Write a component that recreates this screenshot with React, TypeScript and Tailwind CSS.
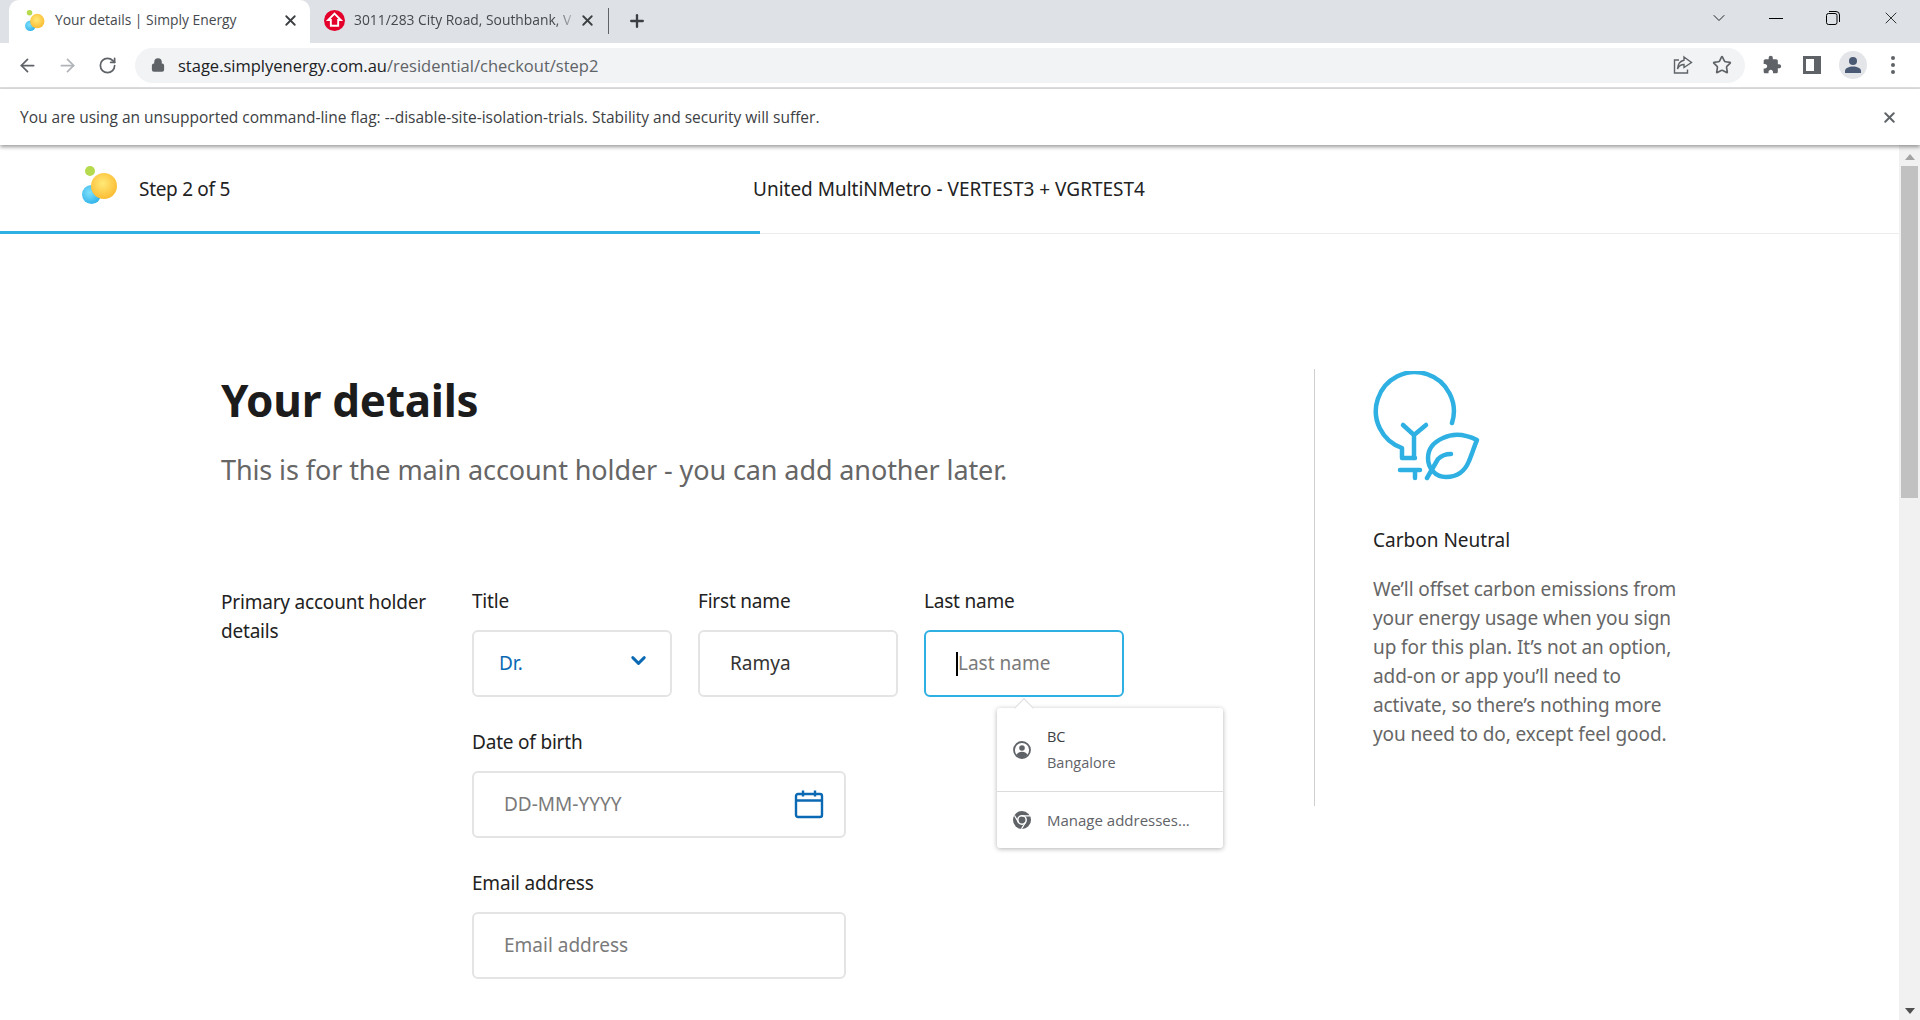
import { ArrowLeft, ArrowRight, ChevronDown, Lock, Plus, RotateCw, Star, X } from "lucide-react";

const Logo = ({ size }: { size: number }) => (
  <svg width={size} height={size} viewBox="0 0 38 38" className="shrink-0">
    <defs>
      <radialGradient id="sun" cx="45%" cy="40%" r="65%">
        <stop offset="0%" stopColor="#ffe977" />
        <stop offset="100%" stopColor="#fbb92e" />
      </radialGradient>
      <radialGradient id="sky" cx="40%" cy="40%" r="70%">
        <stop offset="0%" stopColor="#7fe0fb" />
        <stop offset="100%" stopColor="#29aee8" />
      </radialGradient>
    </defs>
    <circle cx="10" cy="5" r="5" fill="#b6da4e" />
    <circle cx="11.500" cy="28.500" r="9.500" fill="url(#sky)" />
    <circle cx="24" cy="20" r="13" fill="url(#sun)" />
  </svg>
);

const Field = ({ label, width, children }: { label: string; width: string; children: React.ReactNode }) => (
  <div className={width}>
    <div className="h-[41px] text-[19px] leading-[24px] tracking-[-0.2px] text-[#222]">{label}</div>
    {children}
  </div>
);

const boxClass = "flex h-[67px] items-center rounded-[6px] border-2 bg-white text-[19px]";

function TabStrip() {
  return (
    <div className="flex h-[43px] bg-[#dee1e6] pl-[9px] text-[13.85px] text-[#45494d]">
      <div className="flex w-[301px] items-center rounded-t-[10px] bg-white pb-[2px] pl-[15px] pr-[11px]">
        <Logo size={21} />
        <span className="ml-[10px] flex-1">Your details | Simply Energy</span>
        <X size={17} strokeWidth={2.6} className="text-[#3c4043]" />
      </div>
      <div className="flex w-[298px] items-center pb-[2px] pl-[14px] pr-[12px]">
        <svg width="21" height="21" viewBox="0 0 20 20" className="shrink-0">
          <circle cx="10" cy="10" r="10" fill="#e4002b" />
          <path d="M10 3.500 16 9.500h-2.500V15h-7V9.500H4Z" fill="none" stroke="#fff" strokeWidth="1.800" />
        </svg>
        <span className="ml-[9px] w-[224px] overflow-hidden whitespace-nowrap [mask-image:linear-gradient(to_right,black_90%,transparent)]">
          3011/283 City Road, Southbank, V
        </span>
        <X size={17} strokeWidth={2.6} className="ml-auto text-[#3c4043]" />
      </div>
      <div className="mt-[8px] h-[26px] w-px bg-[#5f6368]" />
      <Plus size={20} strokeWidth={2.8} className="ml-[18px] mt-[11px] text-[#3c4043]" />
      <div className="mb-[7px] ml-auto flex items-center pr-[19px] text-[#222]">
        <ChevronDown size={20} strokeWidth={1.2} />
        <div className="ml-[40px] h-px w-[14px] bg-black" />
        <svg width="14" height="14" viewBox="0 0 14 14" className="ml-[43px]" fill="none" stroke="#000" strokeWidth="1">
          <rect x="0.500" y="2.500" width="10.500" height="11" rx="2" />
          <path d="M3 .5h7a3.500 3.500 0 0 1 3.500 3.500v7" />
        </svg>
        <X size={20} strokeWidth={1.1} className="ml-[41px]" />
      </div>
    </div>
  );
}

function Toolbar() {
  return (
    <div className="flex h-[46px] items-center border-b-2 border-[#dedfe1] bg-white text-[#5f6368]">
      <ArrowLeft size={21} strokeWidth={2} className="ml-[17px]" />
      <ArrowRight size={21} strokeWidth={2} className="ml-[19px] text-[#b0b3b7]" />
      <RotateCw size={19} strokeWidth={2.2} className="ml-[20px]" />
      <div className="ml-[18px] flex h-[35px] w-[1610px] items-center rounded-full bg-[#f1f3f4] pl-[16px] pr-[13px]">
        <Lock size={14} strokeWidth={3} fill="#5f6368" />
        <div className="ml-[13px] flex-1 pt-[2px] text-[16.5px]">
          <span className="text-[#202124]">stage.simplyenergy.com.au</span>
          <span>/residential/checkout/step2</span>
        </div>
        <svg width="20" height="20" viewBox="0 0 20 20" fill="none" stroke="#5f6368" strokeWidth="1.400">
          <path d="M6 5H1.500v13h13v-3.500" />
          <path d="M11 2l7.500 5.500L11 12.500V9.500C8 9.500 5.800 11 4.500 14 4.800 9.500 7 6 11 5.200Z" />
        </svg>
        <Star size={20} strokeWidth={2} className="ml-[19px]" />
      </div>
      <svg width="20" height="20" viewBox="0 0 24 24" className="ml-[17px]" fill="#5f6368">
        <path d="M20.500 11H19V7c0-1.100-.9-2-2-2h-4V3.500C13 2.120 11.880 1 10.500 1S8 2.120 8 3.500V5H4c-1.100 0-1.990.9-1.990 2v3.800H3.500c1.490 0 2.700 1.210 2.700 2.700s-1.210 2.700-2.700 2.700H2V20c0 1.100.9 2 2 2h3.800v-1.500c0-1.490 1.210-2.700 2.700-2.700 1.490 0 2.700 1.210 2.700 2.700V22H17c1.100 0 2-.9 2-2v-4h1.500c1.380 0 2.500-1.120 2.500-2.500S21.880 11 20.500 11z" />
      </svg>
      <div className="ml-[21px] h-[18px] w-[18px] border-[3px] border-[#5f6368] bg-white pl-[8px]">
        <div className="h-full w-full bg-[#5f6368]" />
      </div>
      <div className="ml-[18px] flex h-[28px] w-[28px] items-center justify-center rounded-full bg-[#e3e5e9]">
        <svg width="18" height="18" viewBox="0 0 18 18" fill="#4a5a75">
          <circle cx="9" cy="5" r="4" />
          <path d="M1 17v-2c0-3 4-4.500 8-4.500s8 1.500 8 4.500v2Z" />
        </svg>
      </div>
      <div className="ml-[24px] flex flex-col gap-[3px]">
        <div className="h-[4px] w-[4px] rounded-full bg-[#5f6368]" />
        <div className="h-[4px] w-[4px] rounded-full bg-[#5f6368]" />
        <div className="h-[4px] w-[4px] rounded-full bg-[#5f6368]" />
      </div>
    </div>
  );
}

function InfoBar() {
  return (
    <div className="z-10 flex h-[56px] items-center justify-between bg-white pl-[20px] pr-[22px] pt-px text-[15.5px] text-[#3c4043] shadow-[0_2px_4px_rgba(0,0,0,0.4)]">
      <span>You are using an unsupported command-line flag: --disable-site-isolation-trials. Stability and security will suffer.</span>
      <X size={17} strokeWidth={2.8} className="text-[#5f6368]" />
    </div>
  );
}

function AddressPopup() {
  return (
    <div className="absolute left-[73px] top-[119px] z-10 w-[226px] rounded-[3px] bg-white font-['Open_Sans',sans-serif] text-[#5f6368] shadow-[0_1px_5px_rgba(0,0,0,0.3)]">
      <div className="absolute left-[20px] top-[-7px] h-[14px] w-[14px] rotate-45 border-l border-t border-[#dddddd] bg-white" />
      <div className="relative flex h-[84px] items-center border-b border-[#dcdcdc] pl-[16px]">
        <svg width="18" height="18" viewBox="0 0 18 18">
          <circle cx="9" cy="9" r="8" fill="none" stroke="#5f6368" strokeWidth="1.800" />
          <circle cx="9" cy="7" r="2.800" fill="#5f6368" />
          <path d="M3.500 14c1-2.500 3-3.300 5.500-3.300s4.500.8 5.500 3.300A8 8 0 0 1 9 16.500 8 8 0 0 1 3.500 14Z" fill="#5f6368" />
        </svg>
        <div className="ml-[16px] text-[14.5px]">
          <div className="h-[26px] text-[#3c4043]">BC</div>
          <div>Bangalore</div>
        </div>
      </div>
      <div className="flex h-[56px] items-center pl-[16px] text-[15px]">
        <svg width="18" height="18" viewBox="0 0 18 18">
          <circle cx="9" cy="9" r="9" fill="#5f6368" />
          <circle cx="9" cy="9" r="4.200" fill="#5f6368" stroke="#fff" strokeWidth="1.500" />
          <path d="M9 4.800h8M5.400 11.100 1.500 4.500M12.600 11.100 8.500 17.800" stroke="#fff" strokeWidth="1.200" />
        </svg>
        <span className="ml-[16px]">Manage addresses...</span>
      </div>
    </div>
  );
}

function Form() {
  return (
    <div className="mt-[101px] flex">
      <div className="mt-[-1px] w-[251px] text-[19px] leading-[29px] tracking-[-0.2px] text-[#222]">
        Primary account holder
        <br />
        details
      </div>
      <div className="flex flex-col gap-[33px]">
        <div className="flex gap-[26px]">
          <Field label="Title" width="w-[200px]">
            <div className={`${boxClass} justify-between border-[#e4e4e4] pl-[25px] pr-[20px] text-[#0b69b4]`}>
              <span>Dr.</span>
              <ChevronDown size={23} strokeWidth={3} className="mb-[6px]" />
            </div>
          </Field>
          <Field label="First name" width="w-[200px]">
            <div className={`${boxClass} border-[#e4e4e4] pl-[30px] text-[#333]`}>Ramya</div>
          </Field>
          <div className="relative">
            <Field label="Last name" width="w-[200px]">
              <div className={`${boxClass} border-[#2fb0e3] pl-[30px] text-[#7a7a7a]`}>
                <span className="h-[24px] w-[2px] bg-black" />
                Last name
              </div>
            </Field>
            <AddressPopup />
          </div>
        </div>
        <Field label="Date of birth" width="w-[374px]">
          <div className={`${boxClass} justify-between border-[#e4e4e4] pl-[30px] pr-[20px] text-[#7a7a7a]`}>
            <span>DD-MM-YYYY</span>
            <svg width="30" height="30" viewBox="0 0 30 30" className="mb-[2px]" fill="none" stroke="#0b69b4" strokeWidth="2.400">
              <rect x="2" y="5" width="26" height="23" rx="2" />
              <path d="M2 11.500h26M9 1.500v6M21 1.500v6" />
            </svg>
          </div>
        </Field>
        <Field label="Email address" width="w-[374px]">
          <div className={`${boxClass} border-[#e4e4e4] pl-[30px] text-[#7a7a7a]`}>Email address</div>
        </Field>
      </div>
    </div>
  );
}

function CarbonAside() {
  return (
    <aside className="ml-[7px] h-[437px] w-[352px] self-start border-l border-[#cfcfcf] pl-[58px] pt-[2px]">
      <svg width="107" height="110" viewBox="33 20 107 110" fill="none" stroke="#2fb0e3" strokeWidth="4.500" strokeLinecap="round" strokeLinejoin="round">
        <path d="M112 72A39 39 0 1 0 62 97V107H75" />
        <path d="M63 74 74 84 86 74M74 84V107" />
        <path d="M60 119H80M75 119V127" />
        <path d="M137 89C125 83 113 82 103 87 94 91 88 98 88 107 88 117 95 126 106 126 118 126 125 120 129 110 132 103 134 96 137 89Z" />
        <path d="M87 127 98 108C101 105 106 103 111 103" />
      </svg>
      <div className="mt-[45px] text-[19px] text-[#222]">Carbon Neutral</div>
      <p className="mt-[20px] w-[308px] text-[19px] leading-[29px] tracking-[-0.1px] text-[#666]">
        We’ll offset carbon emissions from your energy usage when you sign up for this plan. It’s not an option, add-on or app you’ll need to activate, so there’s nothing more you need to do, except feel good.
      </p>
    </aside>
  );
}

export default function App() {
  return (
    <div className="flex h-[1020px] w-[1920px] flex-col overflow-hidden bg-white font-['Open_Sans',sans-serif]">
      <TabStrip />
      <Toolbar />
      <InfoBar />
      <div className="flex min-h-0 flex-1">
        <main className="min-w-0 flex-1 font-['Noto_Sans',sans-serif]">
          <header className="flex h-[89px] items-center border-b border-[#ececec] pl-[80px]">
            <div className="mb-[9px]">
              <Logo size={38} />
            </div>
            <span className="ml-[21px] w-[614px] text-[19px] tracking-[-0.3px] text-[#222]">Step 2 of 5</span>
            <span className="text-[19px] text-[#222]">United MultiNMetro - VERTEST3 + VGRTEST4</span>
          </header>
          <div className="mt-[-3px] h-[3px] w-[760px] bg-[#2fb0e3]" />
          <div className="mt-[135px] flex pl-[221px]">
            <div className="w-[1086px]">
              <h1 className="mt-[4px] text-[44px] font-bold leading-[54px] tracking-[-0.25px] text-[#1c1c1c]">Your details</h1>
              <p className="mt-[25px] text-[27px] leading-[36px] tracking-[-0.1px] text-[#666]">
                This is for the main account holder - you can add another later.
              </p>
              <Form />
            </div>
            <CarbonAside />
          </div>
        </main>
        <div className="flex w-[21px] shrink-0 flex-col items-center bg-[#f1f1f1]">
          <div className="mt-[9px] h-0 w-0 border-x-[5px] border-b-[6px] border-x-transparent border-b-[#a3a3a3]" />
          <div className="mt-[6px] h-[332px] w-[17px] bg-[#c1c1c1]" />
          <div className="mb-[6px] mt-auto h-0 w-0 border-x-[5px] border-t-[6px] border-x-transparent border-t-[#505050]" />
        </div>
      </div>
    </div>
  );
}
